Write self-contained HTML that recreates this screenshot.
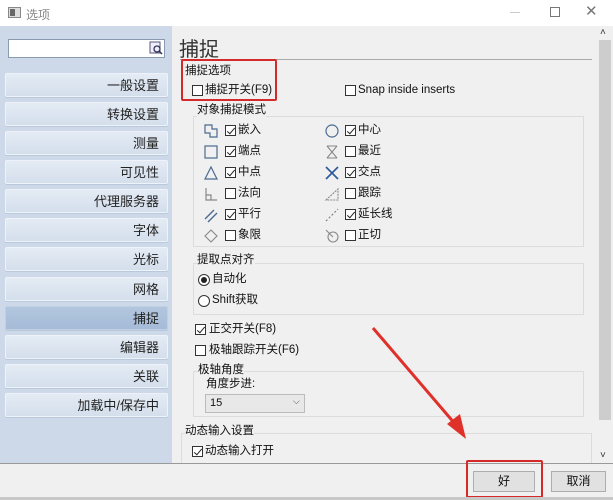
<!DOCTYPE html>
<html><head><meta charset="utf-8"><style>
*{margin:0;padding:0;box-sizing:border-box}
body{width:613px;height:500px;overflow:hidden;background:#f0f0f0;font-family:"Liberation Sans","Noto Sans CJK SC",sans-serif;font-size:11px;color:#111;position:relative}
.a{position:absolute;white-space:nowrap}
.nav{position:absolute;left:5px;width:163px;height:24px;background:linear-gradient(#e4ebf4,#d4dfec);border:1px solid #eef3f9;border-radius:2px;text-align:right;padding-right:8px;line-height:23px;font-size:13px;color:#222;box-shadow:0 1px 0 #b9c8da}
.cb{position:absolute;width:11px;height:11px;border:1px solid #333;background:#fff}
.cb.c::after{content:"";position:absolute;left:3px;top:0px;width:3px;height:7px;border:solid #222;border-width:0 1.3px 1.3px 0;transform:rotate(40deg)}
.t{position:absolute;font-size:11.5px;line-height:13px}
.grp{position:absolute;border:1px solid #dcdcdc}
svg.i{position:absolute}
</style></head><body>
<!-- title bar -->
<div class="a" style="left:0;top:0;width:613px;height:26px;background:#fff"></div>
<div class="a" style="left:8px;top:7px;width:13px;height:11px;border:1px solid #888;background:#ddd"></div>
<div class="a" style="left:10px;top:9px;width:5px;height:7px;background:#666"></div>
<div class="a" style="left:26px;top:6px;font-size:12px;color:#888">选项</div>
<div class="a" style="left:510px;top:12px;width:10px;height:1px;background:#ccc"></div>
<div class="a" style="left:550px;top:7px;width:10px;height:10px;border:1px solid #777"></div>
<div class="a" style="left:585px;top:2px;font-size:15px;color:#777">✕</div>
<!-- left panel -->
<div class="a" style="left:0;top:26px;width:172px;height:187px;background:#cdd9e8;height:438px"></div>
<div class="a" style="left:8px;top:39px;width:157px;height:19px;background:#fff;border:1px solid #8a9ab0"></div>
<svg class="i" style="left:149px;top:41px" width="14" height="14"><rect x="1" y="1" width="10" height="11" fill="#eef" stroke="#557"/><circle cx="8" cy="8" r="3" fill="none" stroke="#335" stroke-width="1.3"/><line x1="10" y1="10" x2="13" y2="13" stroke="#335" stroke-width="1.5"/></svg>
<div class="nav" style="top:73px">一般设置</div>
<div class="nav" style="top:102px">转换设置</div>
<div class="nav" style="top:131px">测量</div>
<div class="nav" style="top:160px">可见性</div>
<div class="nav" style="top:189px">代理服务器</div>
<div class="nav" style="top:218px">字体</div>
<div class="nav" style="top:247px">光标</div>
<div class="nav" style="top:277px">网格</div>
<div class="nav" style="top:306px;background:linear-gradient(#b2c6de,#a5bbd7);border-color:#c0d0e3">捕捉</div>
<div class="nav" style="top:335px">编辑器</div>
<div class="nav" style="top:364px">关联</div>
<div class="nav" style="top:393px">加载中/保存中</div>
<!-- right content -->
<div class="a" style="left:179px;top:33px;font-size:20px;color:#333">捕捉</div>
<div class="a" style="left:180px;top:59px;width:412px;height:1px;background:#aaa"></div>
<div class="t" style="left:185px;top:65px">捕捉选项</div>
<div class="cb" style="left:192px;top:85px"></div><div class="t" style="left:205px;top:84px">捕捉开关(F9)</div>
<div class="cb" style="left:345px;top:85px"></div><div class="t" style="left:358px;top:84px">Snap inside inserts</div>
<div class="a" style="left:181px;top:59px;width:96px;height:42px;border:2px solid #d42a2a;border-radius:2px"></div>
<div class="grp" style="left:193px;top:116px;width:391px;height:131px"></div>
<div class="t" style="left:197px;top:104px;background:#f0f0f0">对象捕捉模式</div>
<!-- col1 -->
<svg class="i" style="left:203px;top:123px" width="16" height="16" fill="none" stroke="#4a6a90" stroke-width="1.2"><path d="M2 2h7v4h5v8H7v-4H2z"/></svg>
<div class="cb c" style="left:225px;top:125px"></div><div class="t" style="left:238px;top:124px">嵌入</div>
<svg class="i" style="left:203px;top:144px" width="16" height="16" fill="none" stroke="#4a6a90" stroke-width="1.2"><rect x="2" y="2" width="12" height="12"/></svg>
<div class="cb c" style="left:225px;top:146px"></div><div class="t" style="left:238px;top:145px">端点</div>
<svg class="i" style="left:203px;top:165px" width="16" height="16" fill="none" stroke="#4a6a90" stroke-width="1.2"><path d="M8 2L14 14H2z"/></svg>
<div class="cb c" style="left:225px;top:167px"></div><div class="t" style="left:238px;top:166px">中点</div>
<svg class="i" style="left:203px;top:186px" width="16" height="16" fill="none" stroke="#888" stroke-width="1.2"><path d="M3 2v12h11M3 9h5v5"/></svg>
<div class="cb" style="left:225px;top:188px"></div><div class="t" style="left:238px;top:187px">法向</div>
<svg class="i" style="left:203px;top:207px" width="16" height="16" fill="none" stroke="#4a6a90" stroke-width="1.4"><path d="M2 12L11 3M5 15L14 6"/></svg>
<div class="cb c" style="left:225px;top:209px"></div><div class="t" style="left:238px;top:208px">平行</div>
<svg class="i" style="left:203px;top:228px" width="16" height="16" fill="none" stroke="#888" stroke-width="1.1"><path d="M8 2L14 8L8 14L2 8z"/></svg>
<div class="cb" style="left:225px;top:230px"></div><div class="t" style="left:238px;top:229px">象限</div>
<!-- col2 -->
<svg class="i" style="left:324px;top:123px" width="16" height="16" fill="none" stroke="#4a6a90" stroke-width="1.2"><circle cx="8" cy="8" r="6"/></svg>
<div class="cb c" style="left:345px;top:125px"></div><div class="t" style="left:358px;top:124px">中心</div>
<svg class="i" style="left:324px;top:144px" width="16" height="16" fill="none" stroke="#888" stroke-width="1.1"><path d="M3 2h10M3 14h10M3 2l10 12M13 2L3 14"/></svg>
<div class="cb" style="left:345px;top:146px"></div><div class="t" style="left:358px;top:145px">最近</div>
<svg class="i" style="left:324px;top:165px" width="16" height="16" fill="none" stroke="#2a5a99" stroke-width="1.6"><path d="M2 2l12 12M14 2L2 14"/></svg>
<div class="cb c" style="left:345px;top:167px"></div><div class="t" style="left:358px;top:166px">交点</div>
<svg class="i" style="left:324px;top:186px" width="16" height="16" fill="none" stroke="#888" stroke-width="1.1"><path d="M2 14L14 3v11z" stroke-dasharray="2 1"/></svg>
<div class="cb" style="left:345px;top:188px"></div><div class="t" style="left:358px;top:187px">跟踪</div>
<svg class="i" style="left:324px;top:207px" width="16" height="16" fill="none" stroke="#777" stroke-width="1.1"><path d="M2 14L14 2" stroke-dasharray="2 2"/></svg>
<div class="cb c" style="left:345px;top:209px"></div><div class="t" style="left:358px;top:208px">延长线</div>
<svg class="i" style="left:324px;top:228px" width="16" height="16" fill="none" stroke="#888" stroke-width="1.1"><circle cx="9" cy="9" r="5"/><path d="M2 2l7 7"/></svg>
<div class="cb" style="left:345px;top:230px"></div><div class="t" style="left:358px;top:229px">正切</div>
<!-- pick point -->
<div class="grp" style="left:193px;top:263px;width:391px;height:52px"></div>
<div class="t" style="left:197px;top:254px;background:#f0f0f0">提取点对齐</div>
<div class="a" style="left:198px;top:274px;width:12px;height:12px;border:1px solid #333;border-radius:50%;background:#fff"></div>
<div class="a" style="left:201px;top:277px;width:6px;height:6px;border-radius:50%;background:#222"></div>
<div class="t" style="left:212px;top:273px">自动化</div>
<div class="a" style="left:198px;top:295px;width:12px;height:12px;border:1px solid #333;border-radius:50%;background:#fff"></div>
<div class="t" style="left:212px;top:294px">Shift获取</div>
<div class="cb c" style="left:195px;top:324px"></div><div class="t" style="left:209px;top:323px">正交开关(F8)</div>
<div class="cb" style="left:195px;top:345px"></div><div class="t" style="left:209px;top:344px">极轴跟踪开关(F6)</div>
<div class="grp" style="left:193px;top:371px;width:391px;height:46px"></div>
<div class="t" style="left:198px;top:364px;background:#f0f0f0">极轴角度</div>
<div class="t" style="left:206px;top:378px">角度步进:</div>
<div class="a" style="left:205px;top:394px;width:100px;height:19px;border:1px solid #bbb;background:#e8e8e8;font-size:11px;line-height:17px;padding-left:4px">15</div>
<div class="a" style="left:293px;top:396px;font-size:9px;color:#444">⌵</div>
<div class="grp" style="left:181px;top:433px;width:411px;height:40px"></div>
<div class="t" style="left:185px;top:425px;background:#f0f0f0">动态输入设置</div>
<div class="cb c" style="left:192px;top:446px"></div><div class="t" style="left:205px;top:445px">动态输入打开</div>
<!-- scrollbar -->
<div class="a" style="left:597px;top:26px;width:16px;height:438px;background:#f0f0f0"></div>
<div class="a" style="left:599px;top:40px;width:12px;height:380px;background:#cdcdcd"></div>
<div class="a" style="left:600px;top:27px;font-size:10px;color:#333">˄</div>
<div class="a" style="left:600px;top:450px;font-size:10px;color:#333">˅</div>
<!-- bottom bar -->
<div class="a" style="left:0;top:463px;width:613px;height:34px;background:#f0f0f0;border-top:1px solid #999"></div>
<div class="a" style="left:473px;top:471px;width:62px;height:21px;background:#e1e1e1;border:1px solid #adadad;text-align:center;font-size:12px;line-height:19px">好</div>
<div class="a" style="left:551px;top:471px;width:55px;height:21px;background:#e1e1e1;border:1px solid #adadad;text-align:center;font-size:12px;line-height:19px">取消</div>
<div class="a" style="left:466px;top:460px;width:77px;height:38px;border:2px solid #d42a2a;border-radius:2px"></div>
<div class="a" style="left:0;top:497px;width:613px;height:3px;background:#c8c8c8"></div>
<!-- arrow -->
<svg class="i" style="left:0;top:0" width="613" height="500"><line x1="373" y1="328" x2="456" y2="425" stroke="#e0302a" stroke-width="3"/><path d="M466 439L447 424L460 414z" fill="#e0302a"/></svg>
</body></html>
